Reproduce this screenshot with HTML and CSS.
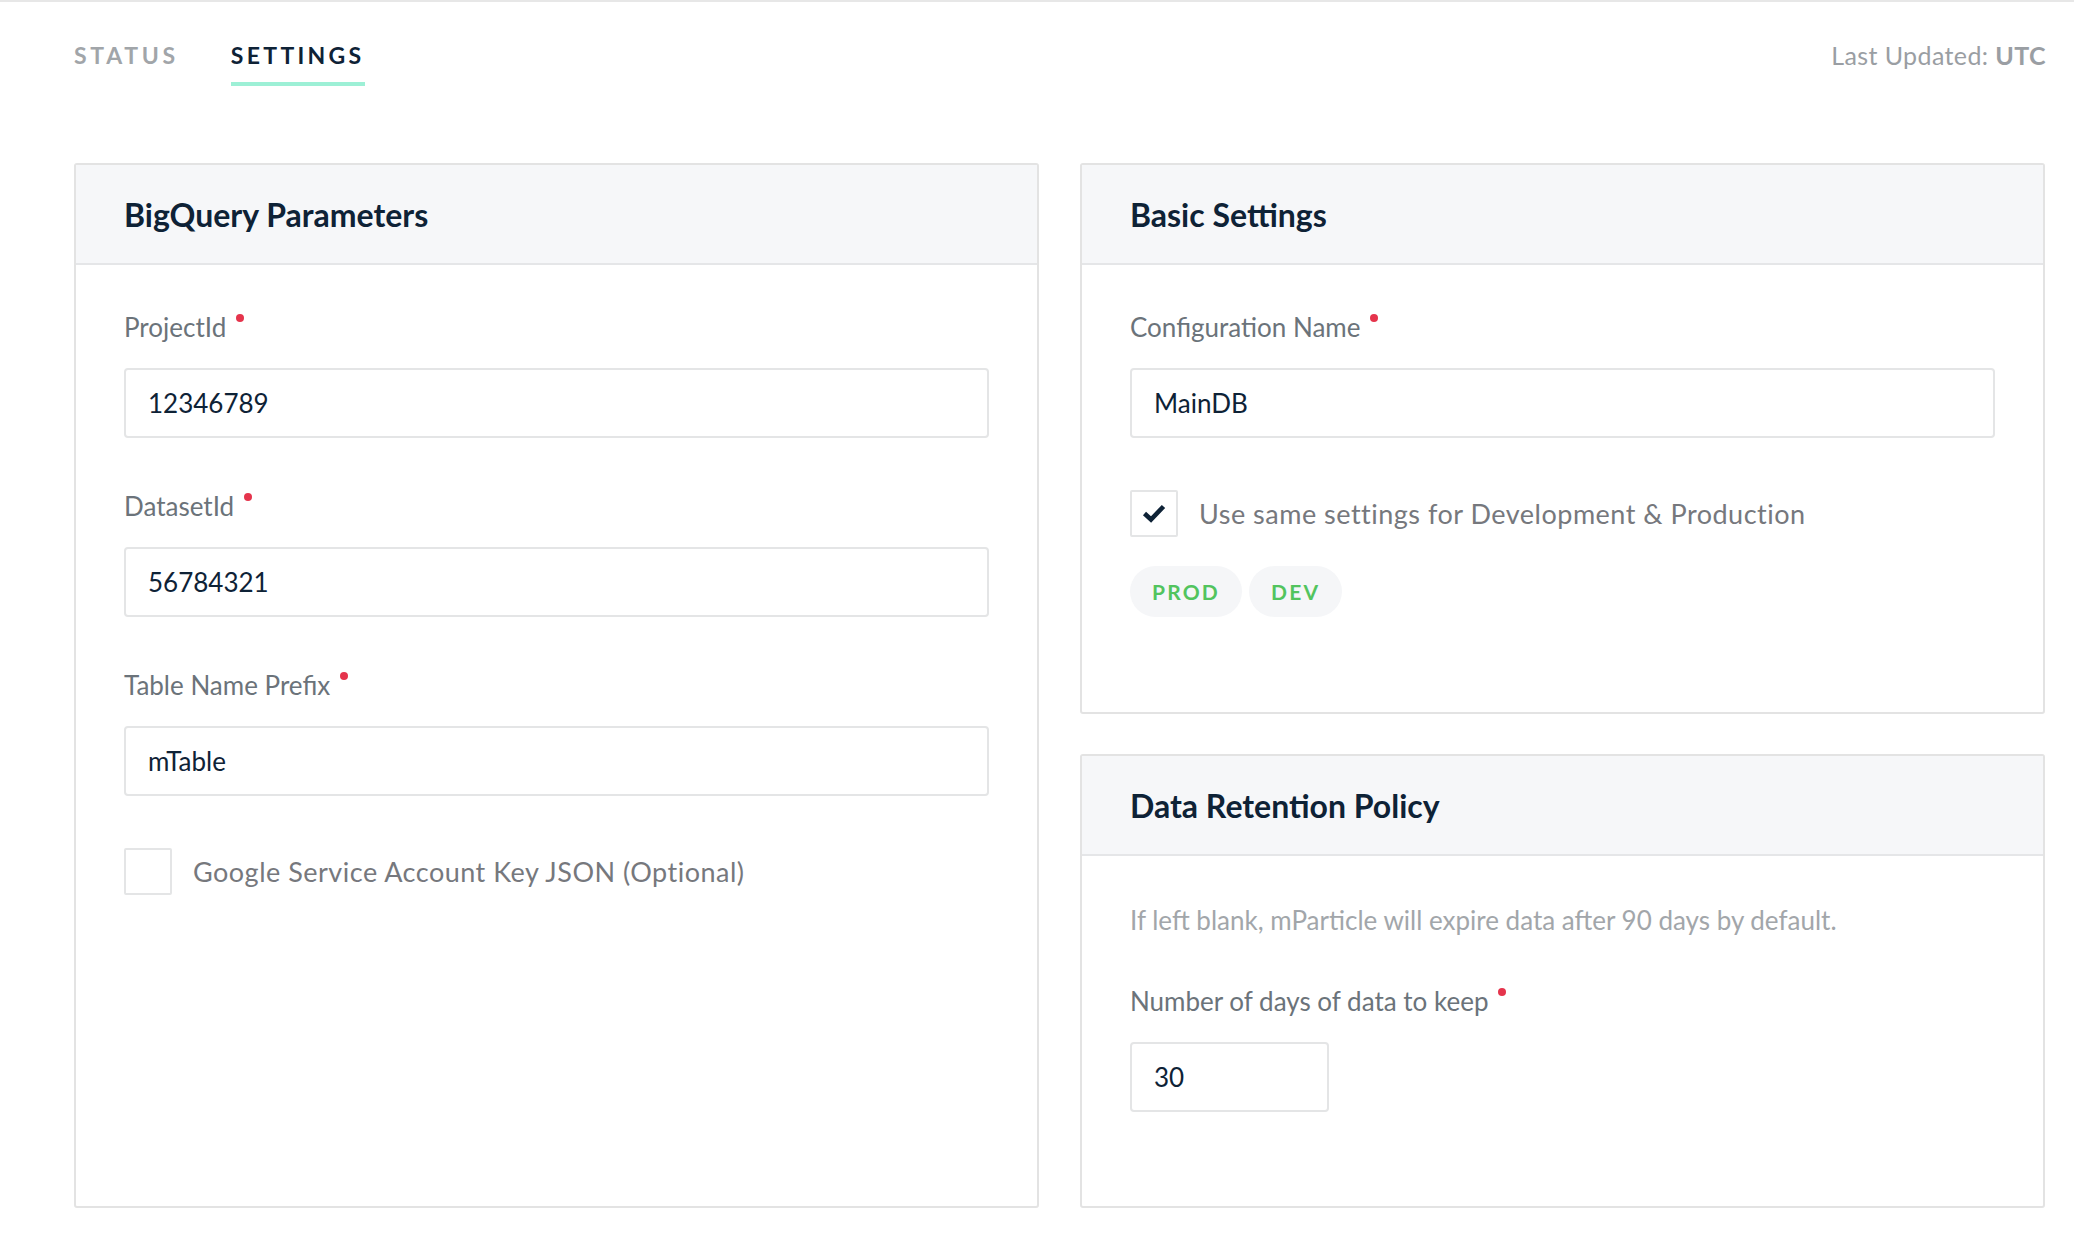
FILE: index.html
```
<!DOCTYPE html>
<html lang="en">
<head>
<meta charset="utf-8">
<title>Settings</title>
<link rel="stylesheet" href="styles.css">
</head>
<body>
<header class="topbar">
  <nav class="tabs">
    <a class="tab">STATUS</a>
    <a class="tab tab-active">SETTINGS</a>
  </nav>
  <div class="updated">Last Updated: <strong>UTC</strong></div>
</header>

<main class="grid">
  <section class="card card-left">
    <div class="card-head"><h2>BigQuery Parameters</h2></div>
    <div class="card-body">
      <div class="field">
        <label class="label req">ProjectId</label>
        <input class="input" type="text" value="12346789">
      </div>
      <div class="field">
        <label class="label req">DatasetId</label>
        <input class="input" type="text" value="56784321">
      </div>
      <div class="field">
        <label class="label req">Table Name Prefix</label>
        <input class="input" type="text" value="mTable">
      </div>
      <div class="check-row">
        <span class="checkbox"></span>
        <span class="check-text">Google Service Account Key JSON (Optional)</span>
      </div>
    </div>
  </section>

  <div class="col-right">
    <section class="card card-basic">
      <div class="card-head"><h2>Basic Settings</h2></div>
      <div class="card-body">
        <div class="field">
          <label class="label req">Configuration Name</label>
          <input class="input" type="text" value="MainDB">
        </div>
        <div class="check-row">
          <span class="checkbox">
            <svg width="24" height="19" viewBox="0 0 24 19"><path d="M2.5 9.5 L9 15.5 L21.5 2.5" fill="none" stroke="#0e2236" stroke-width="4.6"/></svg>
          </span>
          <span class="check-text">Use same settings for Development &amp; Production</span>
        </div>
        <div class="pills">
          <span class="pill">PROD</span>
          <span class="pill">DEV</span>
        </div>
      </div>
    </section>

    <section class="card card-grow">
      <div class="card-head"><h2>Data Retention Policy</h2></div>
      <div class="card-body">
        <p class="help">If left blank, mParticle will expire data after 90 days by default.</p>
        <div class="field field-last">
          <label class="label req">Number of days of data to keep</label>
          <input class="input input-small" type="text" value="30">
        </div>
      </div>
    </section>
  </div>
</main>
</body>
</html>
```

FILE: styles.css
```
* { box-sizing: border-box; }

html, body {
  margin: 0;
  padding: 0;
  background: #ffffff;
  font-family: "Lato", "Liberation Sans", sans-serif;
  color: #0e2236;
}

.topbar {
  border-top: 2px solid #e7e7e7;
  display: flex;
  justify-content: space-between;
  align-items: flex-start;
  padding: 38px 28px 0 74px;
  height: 163px;
}

.tabs {
  display: flex;
  gap: 52px;
}

.tab {
  font-size: 23px;
  line-height: 30px;
  font-weight: 700;
  letter-spacing: 3.7px;
  color: #a1a5a9;
  padding-bottom: 12px;
  border-bottom: 4px solid transparent;
}

.tab-active {
  color: #0e2236;
  letter-spacing: 3.3px;
  border-bottom-color: #9df0d6;
}

.updated {
  font-size: 25px;
  line-height: 30px;
  letter-spacing: 0.4px;
  color: #9a9ea3;
}

.updated strong {
  font-weight: 700;
}

.grid {
  display: grid;
  grid-template-columns: 1fr 1fr;
  column-gap: 41px;
  padding: 0 29px 0 74px;
  height: 1045px;
}

.col-right {
  display: flex;
  flex-direction: column;
  gap: 40px;
}

.card {
  border: 2px solid #e3e3e3;
  border-radius: 3px;
  background: #fff;
}

.card-grow {
  flex: 1;
}

.card-head {
  height: 100px;
  background: #f6f7f9;
  border-bottom: 2px solid #e5e6e8;
  display: flex;
  align-items: center;
  padding: 0 48px;
}

.card-head h2 {
  margin: 0;
  font-size: 32px;
  font-weight: 700;
  color: #0e2236;
  letter-spacing: 0;
}

.card-body {
  padding: 46px 48px 93px 48px;
}

.card-basic .card-body {
  padding-bottom: 95px;
}

.field {
  display: flex;
  flex-direction: column;
  align-items: flex-start;
  margin-bottom: 52px;
}

.field-last {
  margin-bottom: 0;
}

.label {
  font-size: 26px;
  line-height: 32px;
  color: #6b737a;
  margin-bottom: 25px;
  position: relative;
}

.req::after {
  content: "";
  position: absolute;
  right: -18px;
  top: 3px;
  width: 8px;
  height: 8px;
  border-radius: 50%;
  background: #e5344c;
}

.input {
  width: 100%;
  height: 70px;
  border: 2px solid #e4e5e6;
  border-radius: 4px;
  padding: 0 22px;
  font-family: "Lato", "Liberation Sans", sans-serif;
  font-size: 26px;
  color: #0e2236;
  background: #fff;
  outline: none;
}

.input-small {
  width: 199px;
}

.check-row {
  display: flex;
  align-items: center;
  gap: 21px;
}

.checkbox {
  width: 48px;
  height: 47px;
  border: 2px solid #e4e5e6;
  border-radius: 2px;
  display: flex;
  align-items: center;
  justify-content: center;
  flex: none;
}

.check-text {
  font-size: 27px;
  letter-spacing: 0.5px;
  color: #76787d;
}

.pills {
  display: flex;
  gap: 7px;
  margin-top: 29px;
}

.pill {
  height: 51px;
  border-radius: 26px;
  background: #f5f6f8;
  padding: 0 22px;
  display: flex;
  align-items: center;
  font-size: 21px;
  font-weight: 700;
  letter-spacing: 2.2px;
  color: #52c45e;
}

.help {
  margin: 2px 0 49px 0;
  font-size: 26px;
  line-height: 32px;
  color: #a2a6aa;
}
```
